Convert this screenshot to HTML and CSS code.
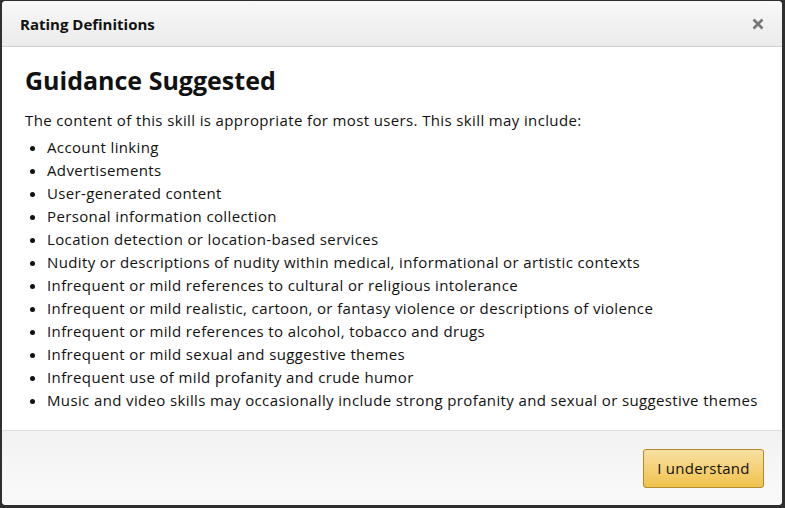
FILE: index.html
```html
<!DOCTYPE html>
<html lang="en">
<head>
<meta charset="utf-8">
<title>Rating Definitions</title>
<link rel="stylesheet" href="styles.css">
</head>
<body>
<div class="modal">
  <div class="modal-header">
    <h2 class="modal-title">Rating Definitions</h2>
    <button class="close" aria-label="Close">
      <svg width="12" height="12" viewBox="0 0 12 12"><path d="M1.5 1.5 L10.5 10.5 M10.5 1.5 L1.5 10.5" stroke="#767676" stroke-width="2.6" stroke-linecap="butt"/></svg>
    </button>
  </div>
  <div class="modal-body">
    <h1 class="rating-title">Guidance Suggested</h1>
    <p class="intro">The content of this skill is appropriate for most users. This skill may include:</p>
    <ul class="items">
      <li>Account linking</li>
      <li>Advertisements</li>
      <li>User-generated content</li>
      <li>Personal information collection</li>
      <li>Location detection or location-based services</li>
      <li>Nudity or descriptions of nudity within medical, informational or artistic contexts</li>
      <li>Infrequent or mild references to cultural or religious intolerance</li>
      <li>Infrequent or mild realistic, cartoon, or fantasy violence or descriptions of violence</li>
      <li>Infrequent or mild references to alcohol, tobacco and drugs</li>
      <li>Infrequent or mild sexual and suggestive themes</li>
      <li>Infrequent use of mild profanity and crude humor</li>
      <li>Music and video skills may occasionally include strong profanity and sexual or suggestive themes</li>
    </ul>
  </div>
  <div class="modal-footer">
    <button class="btn-primary">I understand</button>
  </div>
</div>
</body>
</html>
```

FILE: styles.css
```css
html, body {
  margin: 0;
  padding: 0;
  height: 100%;
}
body {
  background: #2f2f2f;
  font-family: "Open Sans", "Noto Sans", sans-serif;
  color: #111;
  padding: 1px 3px 3px 2px;
  box-sizing: border-box;
}
.modal {
  height: 504px;
  background: #fff;
  border-radius: 4px;
  display: flex;
  flex-direction: column;
  overflow: hidden;
}
.modal-header {
  height: 45px;
  flex: none;
  background: linear-gradient(#f8f8f8, #ebebeb);
  border-bottom: 1px solid #cfcfcf;
  display: flex;
  align-items: center;
  justify-content: space-between;
  padding: 0 18px 0 18px;
}
.modal-title {
  margin: 0;
  font-size: 15px;
  font-weight: 700;
  color: #111;
}
.close {
  border: 0;
  background: none;
  padding: 0;
  display: flex;
  cursor: pointer;
}
.modal-body {
  flex: 1;
  padding: 18px 23px 0 23px;
}
.rating-title {
  margin: 0;
  font-size: 25px;
  font-weight: 700;
  line-height: 30px;
  color: #111;
}
.intro {
  margin: 14px 0 0;
  font-size: 15px;
  line-height: 23px;
  letter-spacing: 0.37px;
}
.items {
  margin: 4px 0 0;
  padding-left: 22px;
  font-size: 15px;
  line-height: 23px;
  letter-spacing: 0.37px;
}
.modal-footer {
  height: 74px;
  flex: none;
  border-top: 1px solid #dedede;
  background: linear-gradient(#f2f2f2, #fafafa);
  display: flex;
  align-items: center;
  justify-content: flex-end;
  padding: 0 18px;
}
.btn-primary {
  width: 121px;
  height: 39px;
  border: 1px solid #b08a2c;
  border-radius: 3px;
  background: linear-gradient(#f8e0a3, #f0c24c);
  font-family: inherit;
  font-size: 15px;
  letter-spacing: 0.25px;
  color: #111;
  cursor: pointer;
}
```
